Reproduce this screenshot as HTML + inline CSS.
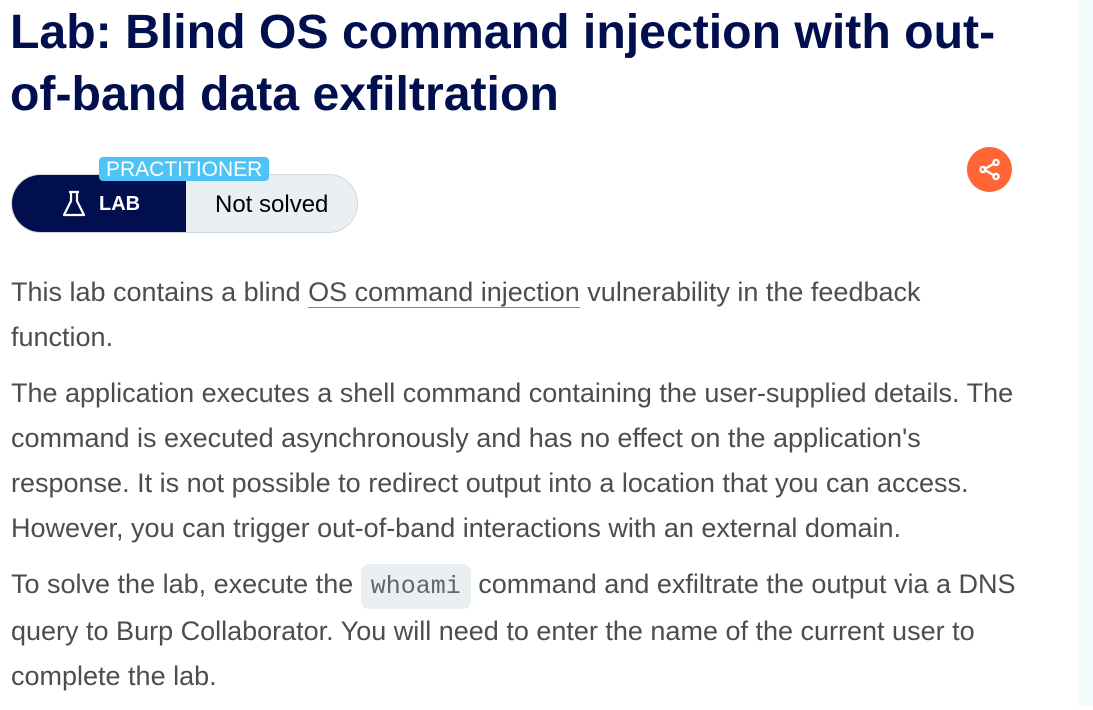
<!DOCTYPE html>
<html><head><meta charset="utf-8"><style>
html,body{margin:0;padding:0;background:#fff;width:1093px;height:705px;overflow:hidden;font-family:"Liberation Sans",Arial,sans-serif}
.strip{position:absolute;left:1078px;top:0;width:15px;height:705px;background:#f3fafc}
h1{position:absolute;left:10px;top:0;margin:0;white-space:nowrap;font-size:48.2px;line-height:62px;font-weight:bold;color:#010f4f;padding-top:1px}
.badge{position:absolute;left:11px;top:174px;width:347px;height:59px;border-radius:30px;border:1px solid #d3d8dc;background:#eaeff2;overflow:hidden;box-sizing:border-box}
.lab{position:absolute;left:0;top:0;width:174px;height:59px;background:#010f4f;color:#fff;font-weight:bold;font-size:20px}
.lab span{position:absolute;left:87px;top:18px}
.lab svg{position:absolute;left:50px;top:15px}
.ns{position:absolute;left:203px;top:16px;font-size:24px;color:#000}
.prac{position:absolute;left:99px;top:157px;height:24px;padding:0 7px;background:#4dc3f6;color:#fff;font-size:21px;line-height:25px;border-radius:4px}
.share{position:absolute;left:967px;top:147px;width:45px;height:45px;border-radius:50%;background:#ff6633}
.txt{position:absolute;left:11px;top:270px;white-space:nowrap;font-size:27px;line-height:45px;color:#4d4d4d}
p{margin:0 0 11px}
a{color:#4d4d4d;text-decoration:none;border-bottom:1px solid #888}
code{font-family:"Courier New","Liberation Mono",monospace;font-size:25px;background:#eaeff2;border-radius:8px;padding:8px 10px;color:#666}
</style></head><body>
<div class="strip"></div>
<h1>Lab: Blind OS command injection with out-<br>of-band data exfiltration</h1>
<div class="badge"><div class="lab"><svg width="24" height="28" viewBox="0 0 24 28" fill="none" stroke="#fff" stroke-width="2.2" stroke-linejoin="round"><path d="M7 2h10M9 2v9L2 25h20L15 11V2"/></svg><span>LAB</span></div><div class="ns">Not solved</div></div>
<div class="prac">PRACTITIONER</div>
<div class="share"><svg width="45" height="45" viewBox="0 0 45 45" fill="none" stroke="#fff" stroke-width="2.3"><path d="M17 22.5L28 16M17 22.5L28 29"/><circle cx="16" cy="22.5" r="2.6"/><circle cx="29" cy="15.5" r="2.6"/><circle cx="29" cy="29.5" r="2.6"/></svg></div>
<div class="txt">
<p>This lab contains a blind <a>OS command injection</a> vulnerability in the feedback<br>function.</p>
<p>The application executes a shell command containing the user-supplied details. The<br>command is executed asynchronously and has no effect on the application's<br>response. It is not possible to redirect output into a location that you can access.<br>However, you can trigger out-of-band interactions with an external domain.</p>
<p>To solve the lab, execute the <code>whoami</code> command and exfiltrate the output via a DNS<br>query to Burp Collaborator. You will need to enter the name of the current user to<br>complete the lab.</p>
</div>
</body></html>
